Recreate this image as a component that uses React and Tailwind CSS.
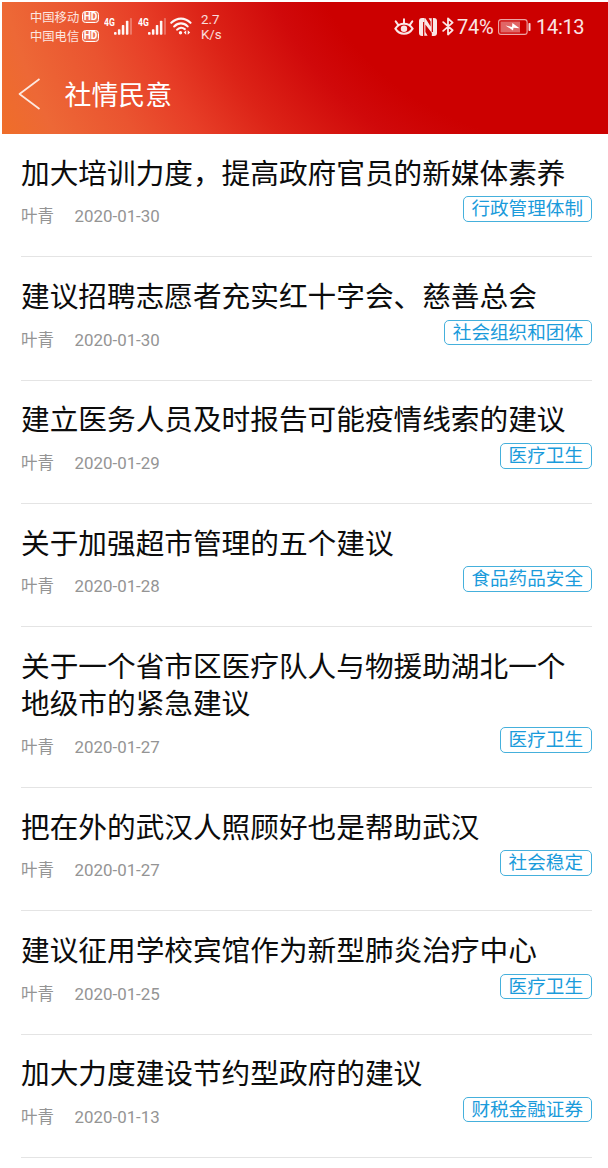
import React from "react";

const items = [
  { title: ["加大培训力度，提高政府官员的新媒体素养"], date: "2020-01-30", tag: "行政管理体制" },
  { title: ["建议招聘志愿者充实红十字会、慈善总会"], date: "2020-01-30", tag: "社会组织和团体" },
  { title: ["建立医务人员及时报告可能疫情线索的建议"], date: "2020-01-29", tag: "医疗卫生" },
  { title: ["关于加强超市管理的五个建议"], date: "2020-01-28", tag: "食品药品安全" },
  { title: ["关于一个省市区医疗队人与物援助湖北一个", "地级市的紧急建议"], date: "2020-01-27", tag: "医疗卫生" },
  { title: ["把在外的武汉人照顾好也是帮助武汉"], date: "2020-01-27", tag: "社会稳定" },
  { title: ["建议征用学校宾馆作为新型肺炎治疗中心"], date: "2020-01-25", tag: "医疗卫生" },
  { title: ["加大力度建设节约型政府的建议"], date: "2020-01-13", tag: "财税金融证券" },
];

function Carrier({ name }) {
  return (
    <div className="flex h-[19px] items-center gap-[3px]">
      <span className="w-[49px] shrink-0 whitespace-nowrap text-[12.3px] leading-[19px]">{name}</span>
      <span className="flex h-[12px] w-[17px] shrink-0 items-center justify-center rounded-[3.5px] border border-white bg-white/20 font-['Roboto'] text-[10px] font-bold leading-none text-white">
        HD
      </span>
    </div>
  );
}

function Signal() {
  return (
    <div className="flex w-[28px] items-start">
      <span className="w-[10px] shrink-0 origin-left scale-x-[0.82] font-['Roboto'] text-[10.5px] font-bold leading-none text-white">4G</span>
      <svg className="h-[18px] w-[18px] shrink-0 text-white/95" viewBox="0 0 18 18" fill="currentColor">
        <rect x="0" y="14.1" width="2.6" height="2.7" rx="0.8" />
        <rect x="3.9" y="11.2" width="2.5" height="5.6" rx="0.7" />
        <rect x="7.8" y="7" width="2.5" height="9.8" rx="0.7" />
        <rect x="11.9" y="2.7" width="2.5" height="14.1" rx="0.7" />
        <rect x="15.9" y="0" width="2.1" height="16.8" rx="0.7" opacity="0.3" />
      </svg>
    </div>
  );
}

function Wifi() {
  return (
    <svg className="h-[19px] w-[22px]" viewBox="0 0 22 19" fill="none" stroke="currentColor" strokeWidth="2.1" strokeLinecap="round">
      <path d="M1.3 5.8C7 .2 15 .2 20.5 5.8M4.2 9.4C8.2 5.4 13.8 5.4 17.6 9.4M7.2 12.6c2-2.2 5.2-2.5 7.6-.5" />
      <circle cx="10.5" cy="15.7" r="1.7" fill="currentColor" stroke="none" />
      <path d="M16.2 13.3v4.4l-2.5-2.2zM17.7 13.3v4.4l2.5-2.2z" fill="currentColor" stroke="none" />
    </svg>
  );
}

function Eye() {
  return (
    <svg className="h-[18px] w-[20px]" viewBox="0 0 20 18" fill="none" stroke="currentColor" strokeWidth="2" strokeLinecap="round">
      <path d="M1.4 10.6C5.6 4.2 14.4 4.2 18.6 10.6C14.4 17.4 5.6 17.4 1.4 10.6Z" />
      <circle cx="10" cy="10.7" r="3.2" fill="currentColor" stroke="none" />
      <path d="M10 1.3v3.4M1.7 3.4l2.3 3.2M18.3 3.4l-2.3 3.2" />
    </svg>
  );
}

function Nfc() {
  return (
    <svg className="h-[18px] w-[18px]" viewBox="0 0 18 18" fill="none">
      <path d="M3 0H5.2V18H3Q0 18 0 15V3Q0 0 3 0Z" fill="currentColor" />
      <path d="M12.8 0H15Q18 0 18 3V15Q18 18 15 18H12.8Z" fill="currentColor" />
      <path d="M6.4 0.3L11.6 8.5V3.5L9.6 0.3H12.8V15L6.4 6.5V14L8.6 17.7H5.2V0.3Z" fill="currentColor" />
      <path d="M4.6 4V18M13.4 0V14" stroke="#cc0505" strokeWidth="1.1" />
    </svg>
  );
}

function Bluetooth() {
  return (
    <svg className="h-[19px] w-[12px]" viewBox="0 0 12 19" fill="none" stroke="currentColor" strokeWidth="1.8" strokeLinejoin="round" strokeLinecap="round">
      <path d="M1.2 5.1L10.6 13.3L6 17.5V1.5L10.6 5.6L1.2 13.9" />
    </svg>
  );
}

function Battery() {
  return (
    <svg className="h-[16px] w-[33px]" viewBox="0 0 33 16">
      <rect x="0.6" y="0.6" width="28.5" height="14.8" rx="2.5" fill="none" stroke="#fff" strokeOpacity="0.65" strokeWidth="1.1" />
      <rect x="2.5" y="2.5" width="19.5" height="11" fill="#fff" fillOpacity="0.4" />
      <path d="M7.5 6.4L14 8L14.4 4L21.5 9.2L15.5 8.8L15 11.4Z" fill="#fff" />
      <rect x="30.5" y="4" width="2" height="8" rx="0.8" fill="#fff" fillOpacity="0.85" />
    </svg>
  );
}

function StatusBar() {
  return (
    <div className="flex h-[49px] items-center pl-[28px] text-white/85">
      <div className="w-[74px] shrink-0">
        <Carrier name="中国移动" />
        <Carrier name="中国电信" />
      </div>
      <div className="flex gap-[6px]">
        <Signal />
        <Signal />
      </div>
      <div className="ml-[4px] text-white/95"><Wifi /></div>
      <div className="ml-[9px] font-['Roboto'] text-[13.3px] leading-[15px]">
        <div>2.7</div>
        <div>K/s</div>
      </div>
      <div className="ml-auto flex items-center pr-[26px] font-['Roboto'] text-[20px] leading-none text-white/90">
        <Eye />
        <div className="ml-[5px]"><Nfc /></div>
        <div className="ml-[5px]"><Bluetooth /></div>
        <span className="ml-[3px] w-[36px] whitespace-nowrap tracking-[-0.3px]">74%</span>
        <div className="ml-[5px]"><Battery /></div>
        <span className="ml-[5px] w-[46px] whitespace-nowrap tracking-[-0.3px]">14:13</span>
      </div>
    </div>
  );
}

function Header() {
  return (
    <header className="h-[132px] bg-[radial-gradient(circle_at_558px_-132px,#cc0000_270px,#d0090a_315px,#dc2317_385px,#e73e27_445px,#ea5430_500px,#ed6836_570px,#ef6e28_620px)]">
      <StatusBar />
      <div className="flex h-[86px] items-center pl-[16px]">
        <svg className="h-[32px] w-[23px]" viewBox="0 0 23 32" fill="none" stroke="#fff" strokeOpacity="0.85" strokeWidth="1.7">
          <path d="M21.5 1L1.5 16L21.5 31" strokeLinejoin="round" />
        </svg>
        <h1 className="ml-[23.5px] text-[26.9px] leading-[40px] text-white">社情民意</h1>
      </div>
    </header>
  );
}

function Row({ title, date, tag }) {
  return (
    <li className="border-b border-[#e4e4e4] pt-[18.6px] pb-[34.45px]">
      <h2 className="text-[28.67px] leading-[37.3px] text-[#0c0c0c]">
        {title.map((line) => (
          <span key={line} className="block whitespace-nowrap">{line}</span>
        ))}
      </h2>
      <div className="mt-[6.5px] flex h-[25.5px] items-start justify-between">
        <div className="mt-[8px] flex text-[16.5px] leading-[25px] text-[#949494]">
          <span className="w-[53.5px] leading-[23px]">叶青</span>
          <span className="font-['Roboto'] text-[16.9px]">{date}</span>
        </div>
        <span className="flex h-[25.5px] items-start rounded-[5px] border border-[#45b0dc] px-[7.5px] text-[18.6px] leading-[20px] text-[#1a9bdb]">
          {tag}
        </span>
      </div>
    </li>
  );
}

export default function App() {
  return (
    <div className="h-[1168px] w-[608px] overflow-hidden bg-white pt-[2px] pl-[2px] font-['Noto_Sans_CJK_SC',sans-serif]">
      <Header />
      <ul className="pr-[16.5px] pl-[19px]">
        {items.map((item) => (
          <Row key={item.title[0]} {...item} />
        ))}
      </ul>
    </div>
  );
}
